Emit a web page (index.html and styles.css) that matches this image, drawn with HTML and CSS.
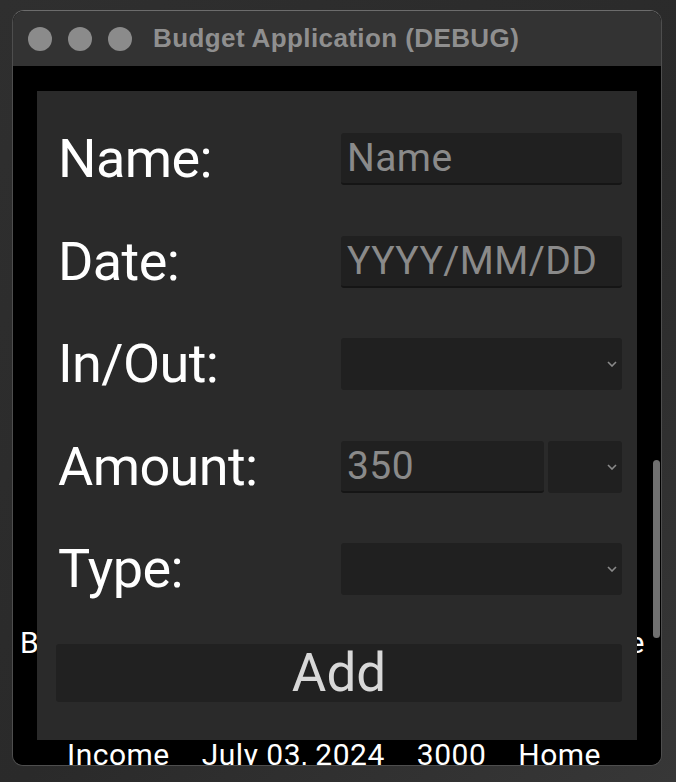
FILE: index.html
```html
<!DOCTYPE html>
<html>
<head>
<meta charset="utf-8">
<title>Budget Application (DEBUG)</title>
<link rel="stylesheet" href="styles.css">
</head>
<body>
<div class="window">
  <div class="titlebar">
    <div class="lights"><span></span><span></span><span></span></div>
    <div class="title">Budget Application (DEBUG)</div>
  </div>
  <div class="content">
    <div class="thead"><span>Budget</span><span>Date</span><span>Amount</span><span>Type</span></div>
    <div class="trow"><span>Income</span><span>July 03, 2024</span><span>3000</span><span>Home</span></div>
    <div class="scrollbar"><div class="thumb"></div></div>
    <div class="dialog">
      <div class="form">
        <label class="label">Name:</label>
        <div class="field input placeholder">Name</div>
        <label class="label">Date:</label>
        <div class="field input placeholder">YYYY/MM/DD</div>
        <label class="label">In/Out:</label>
        <div class="field select"><svg class="chev" width="10" height="6" viewBox="0 0 10 6"><polyline points="1,1 5,5 9,1" fill="none" stroke="#8a8a8a" stroke-width="1.6"/></svg></div>
        <label class="label">Amount:</label>
        <div class="amount">
          <div class="field input value">350</div>
          <div class="field select small"><svg class="chev" width="10" height="6" viewBox="0 0 10 6"><polyline points="1,1 5,5 9,1" fill="none" stroke="#8a8a8a" stroke-width="1.6"/></svg></div>
        </div>
        <label class="label">Type:</label>
        <div class="field select"><svg class="chev" width="10" height="6" viewBox="0 0 10 6"><polyline points="1,1 5,5 9,1" fill="none" stroke="#8a8a8a" stroke-width="1.6"/></svg></div>
      </div>
      <button class="add">Add</button>
    </div>
  </div>
</div>
</body>
</html>
```
FILE: styles.css
```css
html, body {
  margin: 0;
  padding: 0;
}
body {
  width: 676px;
  height: 782px;
  overflow: hidden;
  background: linear-gradient(135deg, #2f2f2f 0%, #2a2a2a 55%, #373737 100%);
  font-family: Roboto, "Liberation Sans", sans-serif;
}
.window {
  margin: 10px 0 0 12px;
  width: 650px;
  height: 756px;
  box-sizing: border-box;
  border: 1px solid #4e4e4e;
  border-top-color: #6c6c6c;
  border-radius: 12px 12px 11px 11px;
  overflow: hidden;
  display: flex;
  flex-direction: column;
  background: #000;
}
.titlebar {
  height: 55px;
  flex: none;
  background: #333333;
  display: flex;
  align-items: center;
  padding-left: 15px;
}
.lights {
  display: flex;
  gap: 16px;
}
.lights span {
  width: 24px;
  height: 24px;
  border-radius: 50%;
  background: #8b8b8b;
}
.title {
  margin-left: 21px;
  font-family: "Liberation Sans", Arial, sans-serif;
  font-weight: bold;
  font-size: 26px;
  color: #8f8f8f;
  letter-spacing: 0.4px;
}
.content {
  flex: 1;
  position: relative;
  overflow: hidden;
  background: #000;
  color: #fff;
  padding-top: 562px;
  box-sizing: border-box;
}
.thead, .trow {
  font-size: 30px;
  line-height: 30px;
  display: flex;
  letter-spacing: 0.5px;
}
.thead {
  justify-content: space-between;
  padding: 0 16px 0 7px;
}
.trow {
  margin-top: 82px;
  padding-left: 54px;
  gap: 32px;
}
.scrollbar {
  position: absolute;
  left: 640px;
  top: 394px;
  width: 7px;
  height: 178px;
}
.thumb {
  width: 100%;
  height: 100%;
  border-radius: 4px;
  background: #707070;
}
.dialog {
  position: absolute;
  left: 24px;
  top: 25px;
  width: 600px;
  height: 649px;
  background: #2a2a2a;
  box-sizing: border-box;
  padding: 42px 15px 0 19px;
  display: flex;
  flex-direction: column;
}
.form {
  display: grid;
  grid-template-columns: 1fr 281px;
  grid-auto-rows: 52px;
  row-gap: 50.5px;
  align-items: center;
}
.label {
  padding-left: 2px;
  font-size: 54px;
  line-height: 52px;
  color: #ffffff;
  letter-spacing: -0.6px;
}
.field {
  height: 52px;
  box-sizing: border-box;
  background: #202020;
  border-radius: 3px;
  position: relative;
}
.input {
  border-bottom: 2px solid #151515;
  padding-left: 6px;
  font-size: 39px;
  line-height: 50px;
  color: #8a8a8a;
  letter-spacing: 0.4px;
}
.amount {
  display: flex;
  gap: 4px;
}
.amount .input {
  width: 203px;
}
.amount .small {
  width: 74px;
}
.chev {
  position: absolute;
  right: 5px;
  top: 23px;
}
.add {
  margin-top: 49px;
  height: 58px;
  border: none;
  border-radius: 3px;
  background: #212121;
  color: #d8d8d8;
  font-family: Roboto, "Liberation Sans", sans-serif;
  font-size: 53px;
  line-height: 58px;
  padding: 0;
}
```
